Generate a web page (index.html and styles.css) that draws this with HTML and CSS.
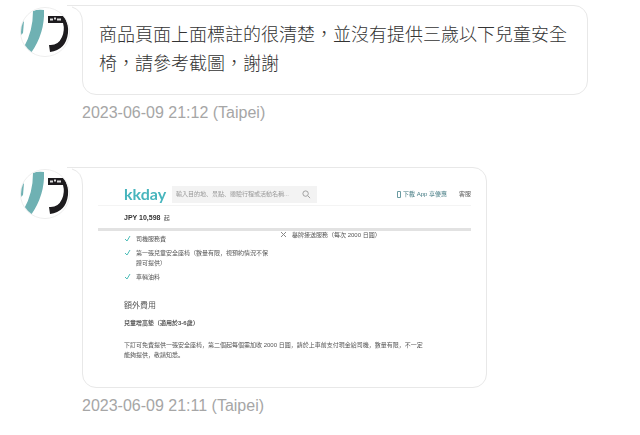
FILE: index.html
```html
<!DOCTYPE html>
<html lang="zh-Hant">
<head>
    <meta charset="UTF-8">
    <meta name="viewport" content="width=device-width, initial-scale=1.0">
    <title>Messages</title>
    <link rel="stylesheet" href="styles.css">
</head>
<body>
    <main class="messages">
        <article class="message">
            <svg class="avatar" viewBox="0 0 50 50" aria-hidden="true">
                <clipPath id="face"><circle cx="25" cy="25" r="24"/></clipPath>
                <circle cx="25" cy="25" r="24.500" fill="#fff" stroke="#eee"/>
                <g id="logo" clip-path="url(#face)">
                    <path d="M13 4Q18 2 24 3Q25 26 11 46L4 40Q13 24 13 4Z" fill="#6fb1b3"/>
                    <path d="M0 18L4 14L3 26L0 29Z" fill="#6fb1b3"/>
                    <path d="M28 9L44 9Q49 18 48 26Q46 43 30 45L29 38Q38 39 42 30Q45 23 43 16L28 16Z" fill="#1d1b1e"/>
                    <path d="M30 12.500h3m1-1h2m1 1h4" stroke="#ddd" stroke-width="2"/>
                </g>
            </svg>
            <div class="content">
                <div class="bubble">
                    <svg class="tail" viewBox="0 0 20 28" aria-hidden="true">
                        <path d="M1 0H20V28H16V18Q16 5 6 2Z" fill="#fff"/>
                        <path d="M1 .5H20" fill="none" stroke="#e8e8e8"/>
                        <path d="M6 2Q16.500 5 16.500 18V28" fill="none" stroke="#e8e8e8"/>
                    </svg>
                    <p class="text">商品頁面上面標註的很清楚，並沒有提供三歲以下兒童安全椅，請參考截圖，謝謝</p>
                </div>
                <time class="time" datetime="2023-06-09T21:12">2023-06-09 21:12 (Taipei)</time>
            </div>
        </article>

        <article class="message">
            <svg class="avatar" viewBox="0 0 50 50" aria-hidden="true">
                <circle cx="25" cy="25" r="24.500" fill="#fff" stroke="#eee"/>
                <use href="#logo"/>
            </svg>
            <div class="content">
                <div class="bubble bubble-photo">
                    <svg class="tail" viewBox="0 0 20 28" aria-hidden="true">
                        <path d="M1 0H20V28H16V18Q16 5 6 2Z" fill="#fff"/>
                        <path d="M1 .5H20" fill="none" stroke="#e8e8e8"/>
                        <path d="M6 2Q16.500 5 16.500 18V28" fill="none" stroke="#e8e8e8"/>
                    </svg>
                    <!-- 截圖內容 -->
                    <div class="shot" lang="ja">
                        <header class="shot-header">
                            <span class="brand">kkday</span>
                            <label class="search">
                                <input class="search-input" type="text" aria-label="搜尋" placeholder="輸入目的地、景點、體驗行程或活動名稱...">
                                <svg class="search-icon" viewBox="0 0 10 10" aria-hidden="true"><path d="M6.500 6.500L9 9M7 4A3 3 0 1 1 1 4A3 3 0 0 1 7 4Z" fill="none" stroke="#999"/></svg>
                            </label>
                            <a class="app" href="#"><svg class="phone" viewBox="0 0 4 7" aria-hidden="true"><path d="M.5.5h3v6h-3z" fill="none" stroke="#6a9ba1"/></svg>下載 App 享優惠</a>
                            <a class="help" href="#">客服</a>
                        </header>
                        <div class="price"><b>JPY 10,598</b>&nbsp; 起</div>
                        <div class="lists">
                            <ul class="list">
                                <li class="item"><svg class="mark" viewBox="0 0 7 7"><path d="M1 4L3 6L6 1" fill="none" stroke="#4dbdb8"/></svg>司機服務費</li>
                                <li class="item"><svg class="mark" viewBox="0 0 7 7"><path d="M1 4L3 6L6 1" fill="none" stroke="#4dbdb8"/></svg>第一張兒童安全座椅（數量有限，視預約情況不保證可提供）</li>
                                <li class="item"><svg class="mark" viewBox="0 0 7 7"><path d="M1 4L3 6L6 1" fill="none" stroke="#4dbdb8"/></svg>車輛油料</li>
                            </ul>
                            <ul class="list list-excluded">
                                <li class="item"><svg class="mark" viewBox="0 0 7 7"><path d="M1 1L6 6M6 1L1 6" fill="none" stroke="#888"/></svg>舉牌接送服務（每次 2000 日圓）</li>
                            </ul>
                        </div>
                        <section class="fees">
                            <h2 class="fees-title">額外費用</h2>
                            <h3 class="fees-name">兒童增高墊（適用於3-6歲）</h3>
                            <p class="fees-text">下訂可免費提供一張安全座椅，第二個起每個需加收 2000 日圓，請於上車前支付現金給司機，數量有限，不一定能夠提供，敬請知悉。</p>
                        </section>
                    </div>
                </div>
                <time class="time" datetime="2023-06-09T21:11">2023-06-09 21:11 (Taipei)</time>
            </div>
        </article>
    </main>
</body>
</html>
```
FILE: styles.css
```css
*{box-sizing: border-box;}
body{
    margin: 0;
    background-color: #fff;
    font-family: "Liberation Sans", "Noto Sans CJK TC", sans-serif;
}
ul{list-style: none; margin: 0; padding: 0;}
h2, h3, p{margin: 0;}
a{text-decoration: none;}

.messages{
    display: flex;
    flex-direction: column;
    gap: 45px;
    padding: 5px 52px 0 20px;
}
.message{
    display: flex;
    align-items: flex-start;
    gap: 12px;
}
.avatar{
    flex: none;
    width: 50px;
    height: 50px;
    margin-top: 2px;
}
.content{
    flex: 1;
    min-width: 0;
}
.bubble{
    position: relative;
    max-width: 506px;
    border: 1px solid #e8e8e8;
    border-radius: 0 14px 14px 14px;
    padding: 15px 16px;
}
.bubble-photo{
    max-width: 405px;
    padding: 15px;
}
/* 大頭貼旁的對話框尖角 */
.tail{
    position: absolute;
    left: -17px;
    top: -1px;
    width: 20px;
    height: 28px;
}
.text{
    color: #333;
    font-size: 18px;
    font-weight: 300;
    line-height: 29px;
}
.time{
    display: block;
    margin-top: 9px;
    color: #a6a6a6;
    font-size: 16px;
    line-height: 18px;
}

.shot{
    color: #555;
    font-family: "Liberation Sans", "Noto Sans CJK JP", sans-serif;
    font-size: 6px;
    line-height: 10px;
    filter: blur(0.6px);
}
.shot-header{
    display: flex;
    align-items: center;
    height: 22px;
    padding-left: 26px;
}
.brand{
    width: 48px;
    color: #47b5bd;
    font: 700 16px/20px Lato, sans-serif;
}
.search{
    display: flex;
    align-items: center;
    flex: 0 1 145px;
    height: 17px;
    padding: 0 6px 0 4px;
    background-color: #f3f3f3;
}
.search-input{
    flex: 1;
    min-width: 0;
    padding: 0;
    border: 0;
    background: none;
    font: inherit;
}
.search-input::placeholder{color: #999;}
.search-icon{width: 9px; height: 9px;}
.app{
    display: flex;
    align-items: center;
    gap: 2px;
    margin-left: auto;
    color: #437a82;
}
.phone{width: 4px; height: 7px;}
.help{
    margin-left: 12px;
    color: #555;
}
.price{
    height: 26px;
    padding-left: 26px;
    border-top: 1px solid #f4f4f4;
    border-bottom: 3px solid #e2e2e2;
    line-height: 23px;
}
.price b{color: #333; font-size: 7px;}
.lists{
    display: grid;
    grid-template-columns: 156px 1fr;
    padding: 3px 0 0 26px;
}
.list{
    display: flex;
    flex-direction: column;
    gap: 4px;
    padding-right: 12px;
}
.list-excluded{
    margin-top: -4px;
}
.item{
    display: flex;
    gap: 5px;
}
.mark{
    flex: none;
    width: 7px;
    height: 7px;
    margin-top: 1px;
}
.fees{padding: 18px 46px 12px 26px;}
.fees-title{
    font-size: 8px;
    font-weight: 400;
    line-height: 12px;
}
.fees-name{
    margin: 6px 0 12px;
    font-size: 6px;
    line-height: 10px;
}
```
